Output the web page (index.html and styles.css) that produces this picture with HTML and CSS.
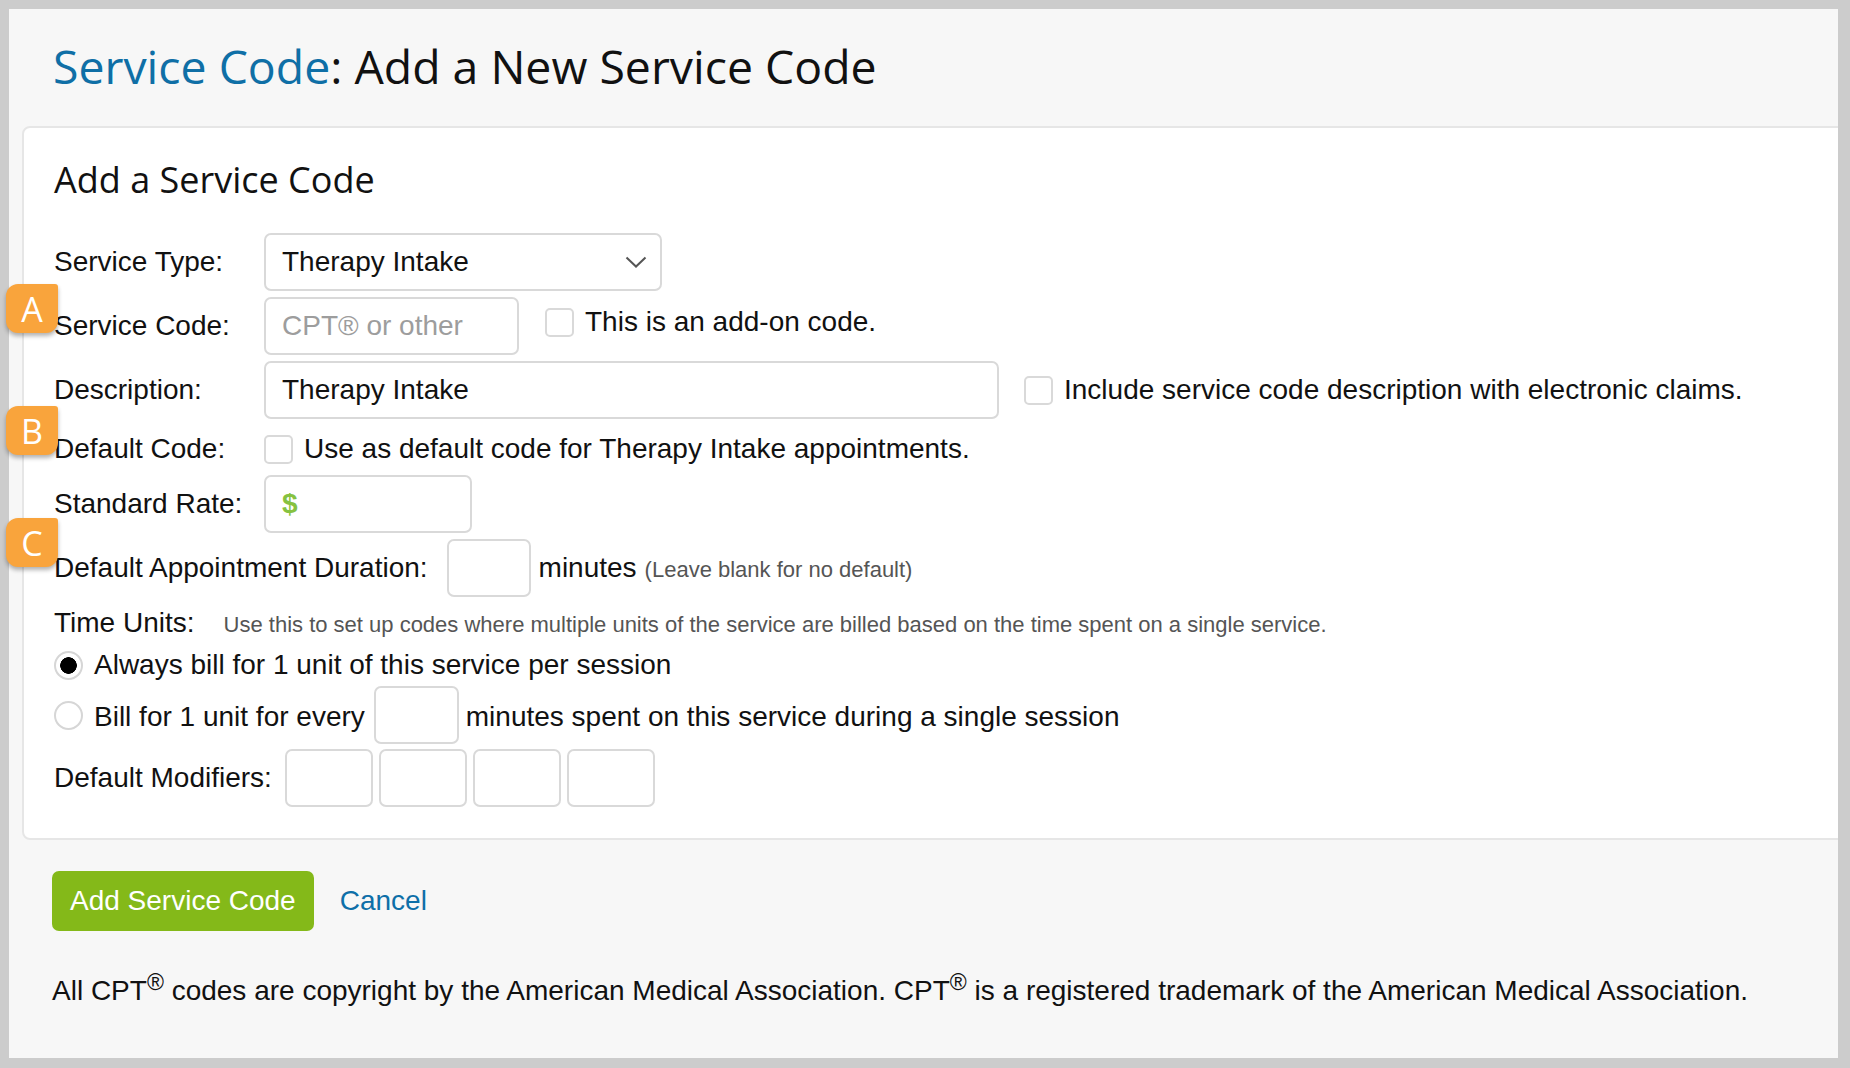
FILE: index.html
```html
<!DOCTYPE html>
<html lang="en">
<head>
<meta charset="utf-8">
<title>Service Code: Add a New Service Code</title>
<link rel="stylesheet" href="styles.css">
</head>
<body>
<div class="page">
  <h1 class="title"><span class="crumb">Service Code</span>: Add a New Service Code</h1>

  <section class="card">
    <h2 class="card-title">Add a Service Code</h2>

    <div class="row r-type">
      <span class="label">Service Type:</span>
      <div class="select">
        <span>Therapy Intake</span>
        <svg class="chev" width="22" height="12" viewBox="0 0 22 12"><polyline points="1.5,1.5 11,10.5 20.5,1.5" fill="none" stroke="#555" stroke-width="2"/></svg>
      </div>
    </div>

    <div class="row r-code">
      <span class="label">Service Code:</span>
      <input class="field w-code" type="text" placeholder="CPT® or other">
      <label class="check addon"><input class="cb" type="checkbox"><span>This is an add-on code.</span></label>
    </div>

    <div class="row r-desc">
      <span class="label">Description:</span>
      <input class="field w-desc" type="text" value="Therapy Intake">
      <label class="check desc-check"><input class="cb" type="checkbox"><span>Include service code description with electronic claims.</span></label>
    </div>

    <div class="row r-default">
      <span class="label">Default Code:</span>
      <label class="check"><input class="cb" type="checkbox"><span>Use as default code for Therapy Intake appointments.</span></label>
    </div>

    <div class="row r-rate">
      <span class="label">Standard Rate:</span>
      <div class="field w-rate"><span class="dollar">$</span></div>
    </div>

    <div class="row r-dur">
      <span class="label-inline">Default Appointment Duration:</span>
      <input class="field w-dur" type="text">
      <span class="after">minutes</span>
      <span class="hint">(Leave blank for no default)</span>
    </div>

    <div class="row r-units">
      <span class="label-inline">Time Units:</span>
      <span class="help">Use this to set up codes where multiple units of the service are billed based on the time spent on a single service.</span>
    </div>

    <div class="row r-radio1">
      <label class="radio-line"><input class="rb" type="radio" name="units" checked><span>Always bill for 1 unit of this service per session</span></label>
    </div>

    <div class="row r-radio2">
      <label class="radio-line"><input class="rb" type="radio" name="units"><span>Bill for 1 unit for every</span></label>
      <input class="field w-every" type="text">
      <span class="after">minutes spent on this service during a single session</span>
    </div>

    <div class="row r-mods">
      <span class="label-inline">Default Modifiers:</span>
      <div class="mods">
        <input class="field w-mod" type="text">
        <input class="field w-mod" type="text">
        <input class="field w-mod" type="text">
        <input class="field w-mod" type="text">
      </div>
    </div>
  </section>

  <div class="actions">
    <button class="btn" type="button">Add Service Code</button>
    <a class="cancel" href="#">Cancel</a>
  </div>

  <p class="legal">All CPT<sup>®</sup> codes are copyright by the American Medical Association. CPT<sup>®</sup> is a registered trademark of the American Medical Association.</p>
</div>

<div class="badge badge-a">A</div>
<div class="badge badge-b">B</div>
<div class="badge badge-c">C</div>
</body>
</html>
```

FILE: styles.css
```css
* { box-sizing: border-box; }

html, body { margin: 0; }

body {
  background: #cccccc;
  padding: 9px 12px 10px 9px;
  font-family: "Liberation Sans", Arial, sans-serif;
  font-size: 28px;
  color: #111;
  position: relative;
}

.page {
  background: #f7f7f7;
  height: 1049px;
  overflow: hidden;
}

.title {
  margin: 0;
  padding: 34px 0 0 44px;
  font-family: "Open Sans", sans-serif;
  font-weight: 400;
  font-size: 46.4px;
  line-height: 47px;
  color: #111;
}

.crumb { color: #0f6fa6; }

.card {
  margin: 36px -20px 0 13px;
  border: 2px solid #e6e6e6;
  border-radius: 8px;
  background: #fff;
  padding: 34px 0 31px 30px;
}

.card-title {
  margin: 0;
  font-family: "Open Sans", sans-serif;
  font-weight: 400;
  font-size: 36px;
  line-height: 36px;
  color: #111;
}

.row {
  display: flex;
  align-items: center;
}

.label { width: 210px; flex: none; }

.r-type { margin-top: 35px; height: 58px; }
.r-code { margin-top: 6px; height: 58px; }
.r-desc { margin-top: 6px; height: 58px; }
.r-default { margin-top: 4px; height: 52px; }
.r-rate { margin-top: 0; height: 58px; }
.r-dur { margin-top: 6px; height: 58px; }
.r-units { margin-top: 6px; height: 40px; }
.r-radio1 { margin-top: 2px; height: 40px; }
.r-radio2 { margin-top: 1px; height: 58px; }
.r-mods { margin-top: 5px; height: 58px; }

.select {
  width: 398px;
  height: 58px;
  border: 2px solid #d9d9d9;
  border-radius: 7px;
  background: #fff;
  display: flex;
  align-items: center;
  justify-content: space-between;
  padding: 0 13px 0 16px;
}

.chev { display: block; }

.field {
  height: 58px;
  border: 2px solid #d9d9d9;
  border-radius: 7px;
  background: #fff;
  padding: 0 16px;
  font-family: "Liberation Sans", Arial, sans-serif;
  font-size: 28px;
  color: #111;
  outline: none;
  margin: 0;
  display: flex;
  align-items: center;
}

.field::placeholder { color: #9d9d9d; }

.w-code { width: 255px; }
.w-desc { width: 735px; }
.w-rate { width: 208px; }
.w-dur { width: 84px; margin-left: 19px; }
.w-every { width: 85px; margin-left: 9px; }
.w-mod { width: 88px; }

.dollar {
  color: #86c240;
  font-weight: bold;
}

.check {
  display: flex;
  align-items: center;
}

.check span { margin-left: 11px; }

.addon { margin-left: 26px; margin-bottom: 8px; }
.addon span { margin-left: 11px; }

.desc-check { margin-left: 25px; }

.cb {
  appearance: none;
  -webkit-appearance: none;
  width: 29px;
  height: 29px;
  margin: 0;
  border: 2px solid #d9d9d9;
  border-radius: 5px;
  background: #fff;
  flex: none;
}

.after { margin-left: 8px; }

.r-radio2 .after { margin-left: 7px; padding-top: 4px; }
.r-radio2 .radio-line span { padding-top: 4px; }

.hint {
  margin-left: 8px;
  font-size: 22px;
  color: #555;
  padding-top: 4px;
}

.help {
  margin-left: 29px;
  font-size: 22px;
  color: #555;
  padding-top: 3px;
}

.radio-line {
  display: flex;
  align-items: center;
}

.radio-line span { margin-left: 11px; }

.rb {
  appearance: none;
  -webkit-appearance: none;
  width: 29px;
  height: 29px;
  margin: 0;
  border: 2px solid #d6d6d6;
  border-radius: 50%;
  background: #fff;
  flex: none;
}

.rb:checked {
  background: radial-gradient(circle, #000 0 8px, #fff 8.6px);
}

.mods {
  display: flex;
  gap: 6px;
  margin-left: 13px;
}

.actions {
  margin: 31px 0 0 43px;
  display: flex;
  align-items: center;
}

.btn {
  height: 60px;
  padding: 0 18px 0 18px;
  background: #84b919;
  color: #fff;
  border: 0;
  border-radius: 7px;
  font-family: "Liberation Sans", Arial, sans-serif;
  font-size: 28px;
}

.cancel {
  margin-left: 26px;
  color: #0e6fa8;
  text-decoration: none;
}

.legal {
  margin: 44px 0 0 43px;
  font-size: 28px;
  line-height: 32px;
  color: #111;
}

.legal sup {
  font-size: 23px;
  line-height: 0;
  vertical-align: 10px;
}

.badge {
  position: absolute;
  left: 6px;
  width: 52px;
  height: 49px;
  background: #f9a43c;
  border-radius: 12px 3px 12px 12px;
  box-shadow: 0 3px 4px rgba(0, 0, 0, 0.3);
  color: #fff;
  font-family: "Open Sans", sans-serif;
  font-size: 34px;
  line-height: 1;
  display: flex;
  align-items: center;
  justify-content: center;
}

.badge-a { top: 284px; }
.badge-b { top: 406px; }
.badge-c { top: 518px; }
```
